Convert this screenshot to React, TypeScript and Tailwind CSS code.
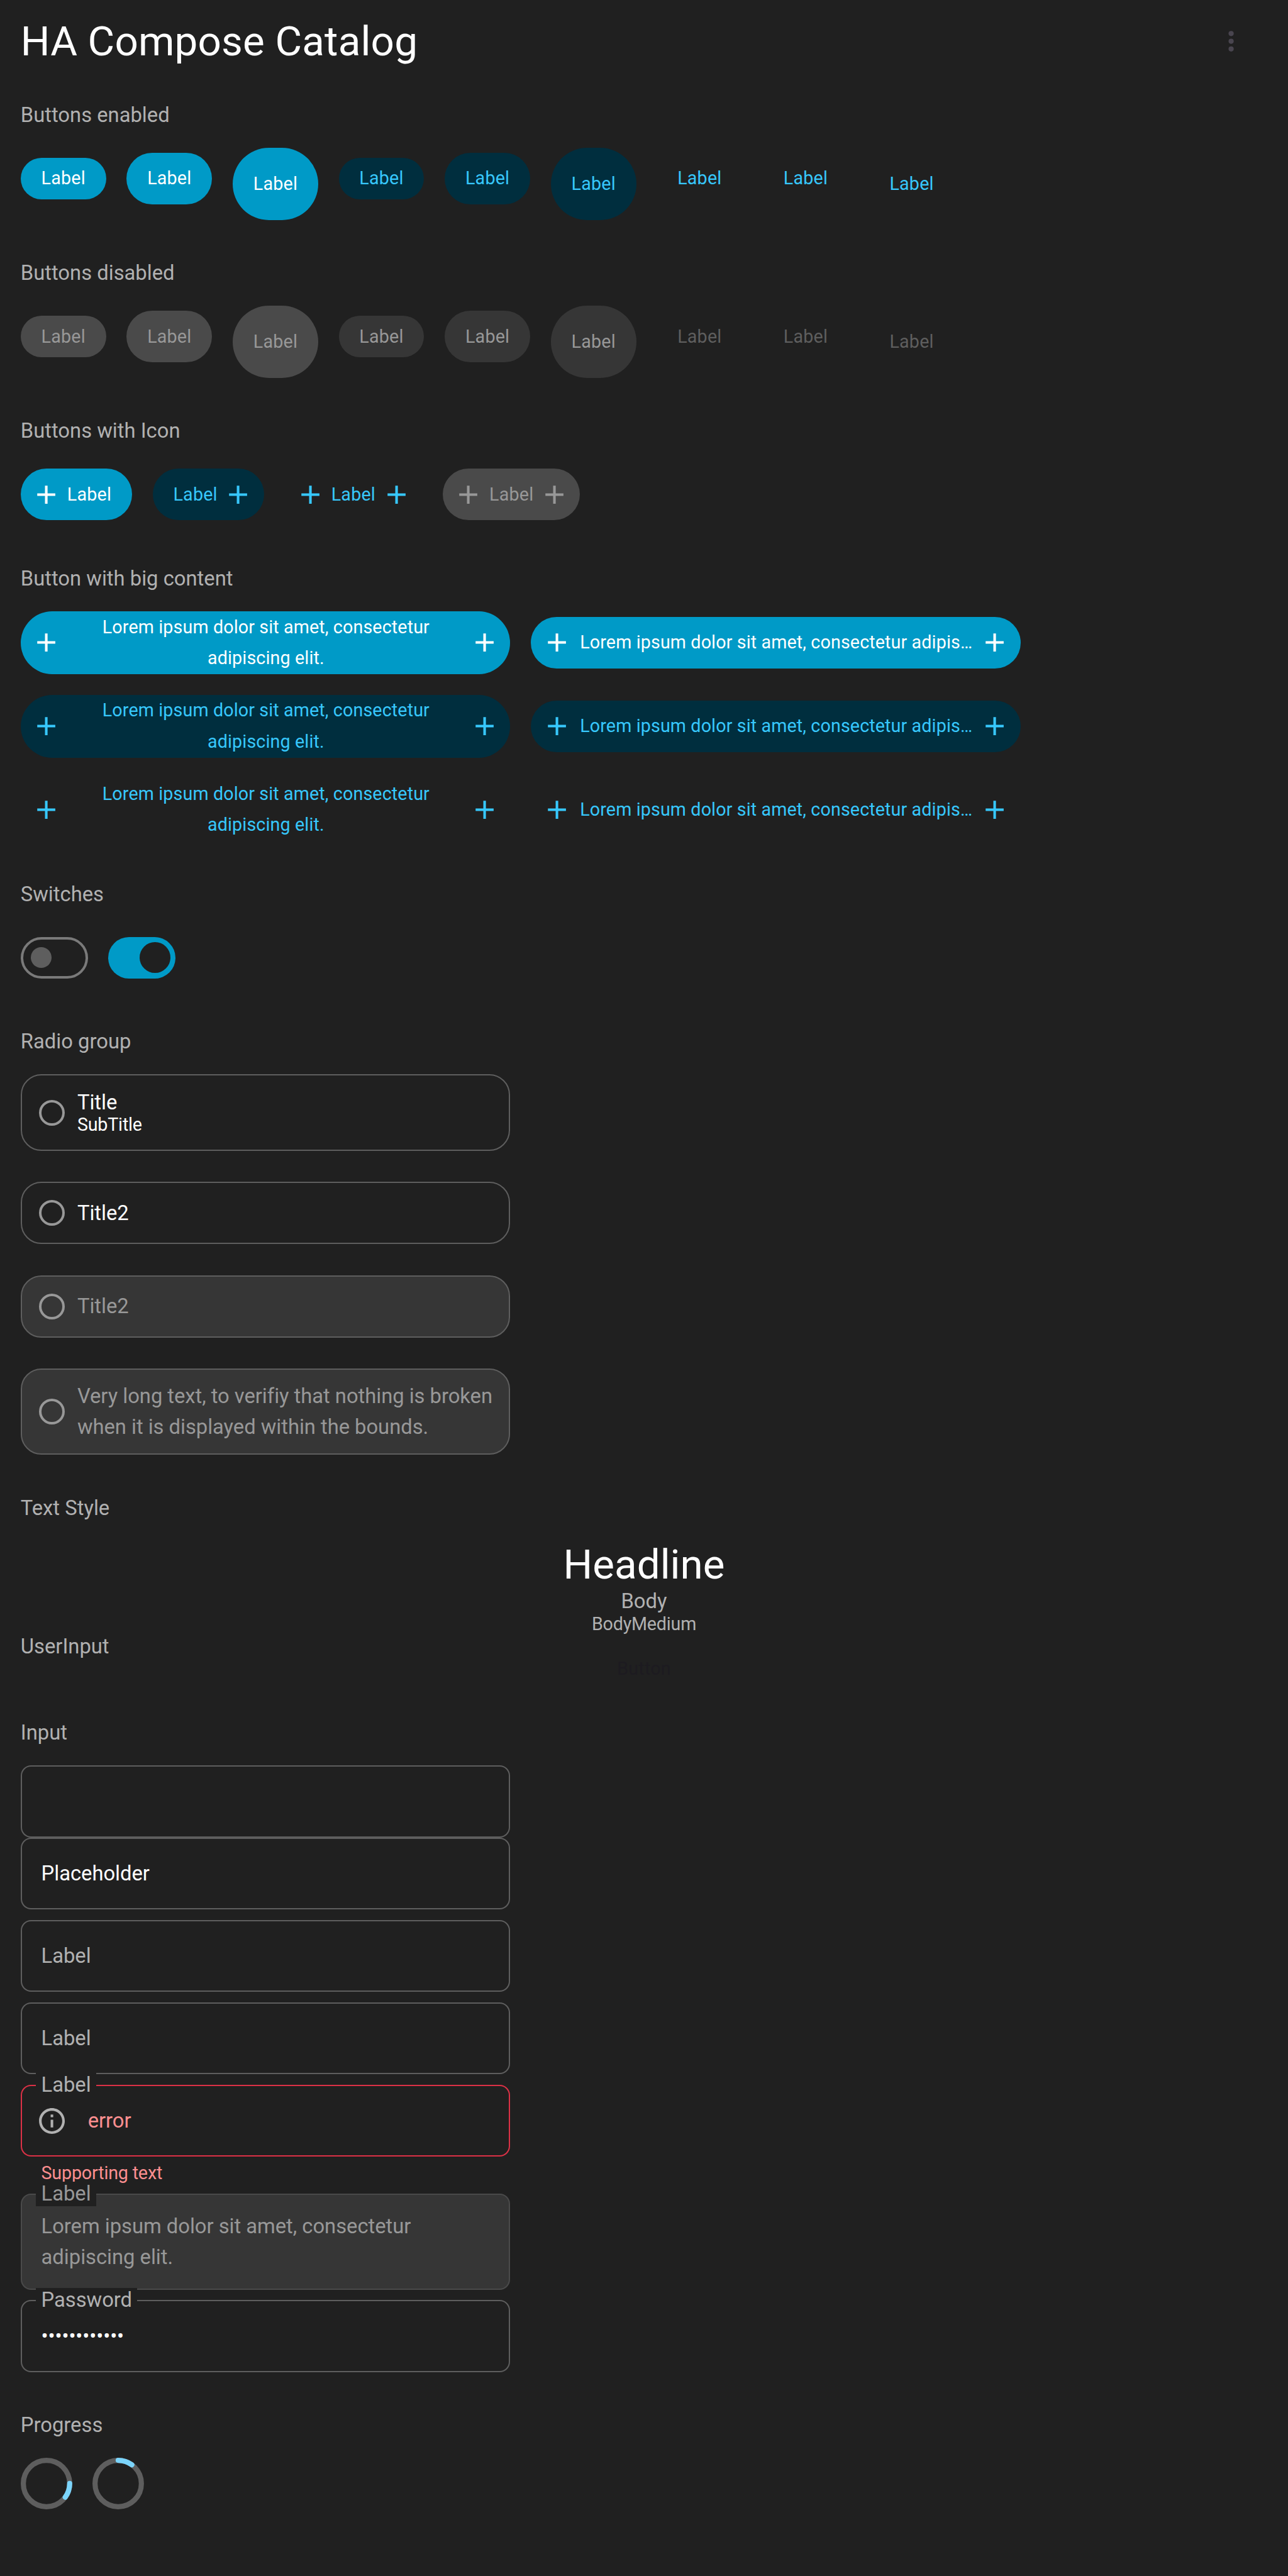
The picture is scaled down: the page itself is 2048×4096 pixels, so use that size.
import type { ReactNode } from "react";

type Variant = "filled" | "tonal" | "text" | "filledOff" | "tonalOff" | "textOff";
type Size = "sm" | "md" | "lg";

const variants: Record<Variant, string> = {
  filled: "bg-[#009ac7] text-white",
  tonal: "bg-[#002e3e] text-[#37c8fd]",
  text: "text-[#37c8fd]",
  filledOff: "bg-[#4a4a4a] text-[#989898]",
  tonalOff: "bg-[#363636] text-[#989898]",
  textOff: "text-[#5e5e5e]",
};

const sizes: Record<Size, string> = { sm: "h-84", md: "h-105", lg: "h-147" };

function Plus() {
  return (
    <svg viewBox="0 0 24 24" className="size-63 shrink-0" fill="currentColor">
      <path d="M19 13h-6v6h-2v-6H5v-2h6V5h2v6h6v2z" />
    </svg>
  );
}

function Section({ title, children }: { title: string; children?: ReactNode }) {
  return (
    <section className="flex flex-col gap-42">
      <h2 className="h-49 leading-50 text-[#b1b1b1]">{title}</h2>
      {children}
    </section>
  );
}

function Button({
  variant,
  size = "md",
  start,
  end,
}: {
  variant: Variant;
  size?: Size;
  start?: boolean;
  end?: boolean;
}) {
  return (
    <div className="flex min-h-126 items-center">
      <button
        className={`flex items-center gap-11 rounded-full text-[28.67px] tracking-[0.205px] leading-63 ${
          start ? "pl-21" : "pl-42"
        } ${end ? "pr-21" : "pr-42"} ${sizes[size]} ${variants[variant]}`}
      >
        {start && <Plus />}
        <span>Label</span>
        {end && <Plus />}
      </button>
    </div>
  );
}

function ButtonGrid({ kinds }: { kinds: Variant[] }) {
  return (
    <div className="flex items-start gap-42">
      {kinds.map((kind) =>
        (["sm", "md", "lg"] as Size[]).map((size) => (
          <Button key={kind + size} variant={kind} size={size} />
        )),
      )}
    </div>
  );
}

function WideButton({ variant, single }: { variant: Variant; single?: boolean }) {
  return (
    <button
      className={`flex w-998 items-center gap-10.5 rounded-full px-21 text-[28.67px] leading-63 tracking-[0.13px] ${
        single ? "h-105" : "h-128"
      } ${variants[variant]}`}
    >
      <Plus />
      <span className="flex-1 pl-2 text-center whitespace-nowrap">
        {single ? (
          "Lorem ipsum dolor sit amet, consectetur adipis…"
        ) : (
          <>
            Lorem ipsum dolor sit amet, consectetur
            <br />
            adipiscing elit.
          </>
        )}
      </span>
      <Plus />
    </button>
  );
}

function Radio({
  height,
  disabled,
  children,
}: {
  height: string;
  disabled?: boolean;
  children: ReactNode;
}) {
  return (
    <div
      className={`flex w-998 items-center rounded-[32.8px] border-2 border-[#5e5e5e] pl-34.5 whitespace-nowrap ${height} ${
        disabled ? "bg-[#363636] text-[#989898]" : "text-white"
      }`}
    >
      <span className="mr-26 size-52.5 shrink-0 rounded-full border-4 border-[#989898]" />
      <div className="pt-2 leading-63 tracking-[-0.04px]">{children}</div>
    </div>
  );
}

function Field({
  height = "h-147",
  look = "border-[#5e5e5e]",
  label,
  labelColor = "text-[#b1b1b1]",
  children,
}: {
  height?: string;
  look?: string;
  label?: string;
  labelColor?: string;
  children?: ReactNode;
}) {
  return (
    <div
      className={`relative flex w-998 items-center rounded-[16.4px] border-2 pl-39.5 leading-63 tracking-[-0.03px] ${height} ${look}`}
    >
      {label && (
        <span
          className={`absolute -top-27 left-29 h-50 bg-[#202020] px-10.5 leading-51 ${labelColor}`}
        >
          {label}
        </span>
      )}
      {children}
    </div>
  );
}

function Spinner({ rotate }: { rotate: string }) {
  return (
    <svg viewBox="0 0 40 40" className="size-105" fill="none" strokeWidth="4">
      <circle cx="20" cy="20" r="18" stroke="#5e5e5e" />
      <path
        d="M38 20A18 18 0 0 1 34.56 30.58"
        stroke="#7bd4fb"
        strokeLinecap="round"
        transform={rotate}
      />
    </svg>
  );
}

export default function App() {
  return (
    <div className="h-[4096px] w-[2048px] overflow-hidden bg-[#202020] font-['Roboto',sans-serif] text-[32.77px] [--spacing:0.78019px]">
      <header className="flex h-168 items-center justify-between pr-84 pl-42 text-white">
        <h1 className="text-[65.54px] leading-105 tracking-[0.17px]">HA Compose Catalog</h1>
        <svg viewBox="0 0 24 24" className="size-63" fill="#49454f">
          <circle cx="12" cy="6" r="2" />
          <circle cx="12" cy="12" r="2" />
          <circle cx="12" cy="18" r="2" />
        </svg>
      </header>

      <main className="flex flex-col gap-84 px-42 pt-42">
        <Section title="Buttons enabled">
          <ButtonGrid kinds={["filled", "tonal", "text"]} />
        </Section>

        <Section title="Buttons disabled">
          <ButtonGrid kinds={["filledOff", "tonalOff", "textOff"]} />
        </Section>

        <Section title="Buttons with Icon">
          <div className="flex gap-42">
            <Button variant="filled" start />
            <Button variant="tonal" end />
            <Button variant="text" start end />
            <Button variant="filledOff" start end />
          </div>
        </Section>

        <Section title="Button with big content">
          <div className="flex flex-col gap-42">
            {(["filled", "tonal", "text"] as Variant[]).map((v) => (
              <div key={v} className="flex items-center gap-42">
                <WideButton variant={v} />
                <WideButton variant={v} single />
              </div>
            ))}
          </div>
        </Section>

        <Section title="Switches">
          <div className="flex h-126 items-center gap-42">
            <div className="flex h-84 w-137 items-center rounded-full border-4 border-[#7a7a7a] pl-16">
              <span className="size-42 rounded-full bg-[#5e5e5e]" />
            </div>
            <div className="flex h-84 w-137 items-center justify-end rounded-full bg-[#009ac7] pr-10.5">
              <span className="size-63 rounded-full bg-[#202020]" />
            </div>
          </div>
        </Section>

        <Section title="Radio group">
          <div className="flex flex-col gap-63">
            <Radio height="h-156">
              <div className="leading-49">Title</div>
              <div className="text-[28.67px] leading-43 tracking-[-0.2px]">SubTitle</div>
            </Radio>
            <Radio height="h-127">Title2</Radio>
            <Radio height="h-127" disabled>
              Title2
            </Radio>
            <Radio height="h-176" disabled>
              Very long text, to verifiy that nothing is broken
              <br />
              when it is displayed within the bounds.
            </Radio>
          </div>
        </Section>

        <div className="flex flex-col">
          <Section title="Text Style">
            <div className="flex h-191 flex-col items-center text-[#b1b1b1]">
              <div className="h-99 shrink-0 text-[65.54px] leading-98 text-white">Headline</div>
              <div className="h-49 shrink-0 leading-50">Body</div>
              <div className="h-43 shrink-0 text-[28.67px] leading-44 tracking-[-0.2px]">
                BodyMedium
              </div>
              <div className="mt-49 h-43 shrink-0 text-[28.67px] leading-43 tracking-[0.205px] text-[#1d1b20]">
                Button
              </div>
            </div>
          </Section>
          <Section title="UserInput">
            <div className="h-1" />
          </Section>
        </div>

        <Section title="Input">
          <div className="flex flex-col">
            <Field />
            <Field>
              <span className="pt-2 text-white">Placeholder</span>
            </Field>
            <div className="mt-21 flex flex-col gap-21">
              <Field>
                <span className="pt-2 text-[#b1b1b1]">Label</span>
              </Field>
              <Field>
                <span className="pt-2 text-[#b1b1b1]">Label</span>
              </Field>
              <div className="flex flex-col gap-11">
                <Field look="border-[#dc3146]" label="Label">
                  <svg viewBox="0 0 24 24" className="-ml-10 size-63" fill="#b1b1b1">
                    <path d="M11 7h2v2h-2zm0 4h2v6h-2zm1-9C6.48 2 2 6.48 2 12s4.48 10 10 10 10-4.48 10-10S17.52 2 12 2zm0 18c-4.41 0-8-3.59-8-8s3.59-8 8-8 8 3.59 8 8-3.59 8-8 8z" />
                  </svg>
                  <span className="ml-42 pt-2 text-[#fd8f90]">error</span>
                </Field>
                <div className="h-43 pl-42 text-[28.67px] leading-45 tracking-[-0.18px] text-[#fd8f90]">
                  Supporting text
                </div>
              </div>
              <Field
                height="h-196"
                look="border-[#4a4a4a] bg-[#363636]"
                label="Label"
                labelColor="text-[#989898]"
              >
                <span className="pt-2 text-[#989898]">
                  Lorem ipsum dolor sit amet, consectetur
                  <br />
                  adipiscing elit.
                </span>
              </Field>
              <Field label="Password">
                <span className="pt-2 tracking-[-0.1px] text-white">••••••••••••</span>
              </Field>
            </div>
          </div>
        </Section>

        <Section title="Progress">
          <div className="flex gap-42">
            <Spinner rotate="rotate(0 20 20)" />
            <Spinner rotate="rotate(-90 20 20)" />
          </div>
        </Section>
      </main>
    </div>
  );
}
